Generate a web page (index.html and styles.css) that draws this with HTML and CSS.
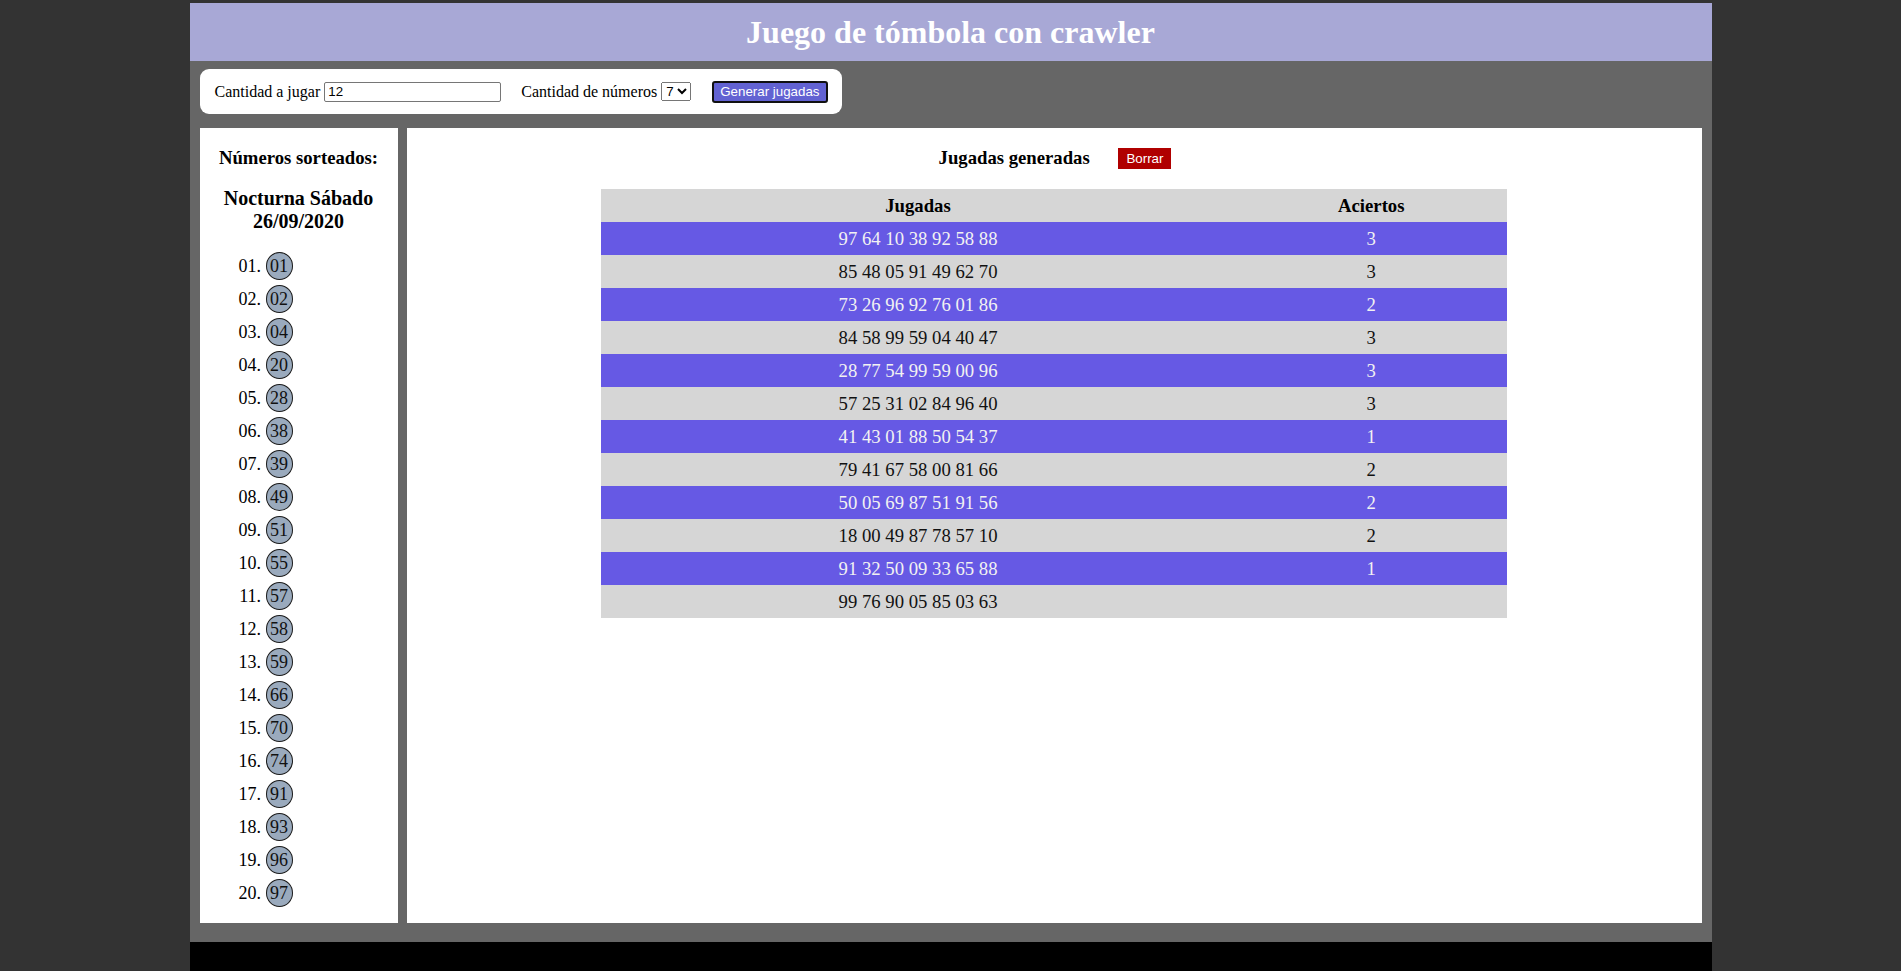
FILE: index.html
```html
<!DOCTYPE html>
<html lang="es">
<head>
<meta charset="utf-8">
<title>Juego de tómbola con crawler</title>
<link rel="stylesheet" href="styles.css">
</head>
<body>
<div class="page">
  <header class="top">
    <h1 class="title">Juego de tómbola con crawler</h1>
  </header>
  <div class="body-area">
    <form class="controls">
      <label class="field">Cantidad a jugar <input class="txt" type="text" value="12"></label>
      <label class="field">Cantidad de números <select class="sel"><option>7</option></select></label>
      <button type="button" class="btn-gen">Generar jugadas</button>
    </form>
    <div class="panels">
      <aside class="side">
        <h3 class="side-title">Números sorteados:</h3>
        <h4 class="draw-name">Nocturna Sábado 26/09/2020</h4>
        <ol class="balls">
          <li><span class="ball">01</span></li>
          <li><span class="ball">02</span></li>
          <li><span class="ball">04</span></li>
          <li><span class="ball">20</span></li>
          <li><span class="ball">28</span></li>
          <li><span class="ball">38</span></li>
          <li><span class="ball">39</span></li>
          <li><span class="ball">49</span></li>
          <li><span class="ball">51</span></li>
          <li><span class="ball">55</span></li>
          <li><span class="ball">57</span></li>
          <li><span class="ball">58</span></li>
          <li><span class="ball">59</span></li>
          <li><span class="ball">66</span></li>
          <li><span class="ball">70</span></li>
          <li><span class="ball">74</span></li>
          <li><span class="ball">91</span></li>
          <li><span class="ball">93</span></li>
          <li><span class="ball">96</span></li>
          <li><span class="ball">97</span></li>
        </ol>
      </aside>
      <main class="main">
        <h3 class="main-title">Jugadas generadas <button type="button" class="btn-del">Borrar</button></h3>
        <table class="plays">
          <thead>
            <tr><th class="c-play">Jugadas</th><th class="c-hits">Aciertos</th></tr>
          </thead>
          <tbody>
            <tr><td>97 64 10 38 92 58 88</td><td>3</td></tr>
            <tr><td>85 48 05 91 49 62 70</td><td>3</td></tr>
            <tr><td>73 26 96 92 76 01 86</td><td>2</td></tr>
            <tr><td>84 58 99 59 04 40 47</td><td>3</td></tr>
            <tr><td>28 77 54 99 59 00 96</td><td>3</td></tr>
            <tr><td>57 25 31 02 84 96 40</td><td>3</td></tr>
            <tr><td>41 43 01 88 50 54 37</td><td>1</td></tr>
            <tr><td>79 41 67 58 00 81 66</td><td>2</td></tr>
            <tr><td>50 05 69 87 51 91 56</td><td>2</td></tr>
            <tr><td>18 00 49 87 78 57 10</td><td>2</td></tr>
            <tr><td>91 32 50 09 33 65 88</td><td>1</td></tr>
            <tr><td>99 76 90 05 85 03 63</td><td></td></tr>
          </tbody>
        </table>
      </main>
    </div>
  </div>
  <footer class="foot"></footer>
</div>
</body>
</html>
```
FILE: styles.css
```css
html, body {
  margin: 0;
  padding: 0;
}
body {
  background: #333333;
  font-family: "Liberation Serif", "Times New Roman", serif;
  font-size: 16px;
  color: #000;
}
.page {
  width: 1522px;
  margin: 3px auto 0;
}
.top {
  background: #a8a8d6;
}
.title {
  margin: 0;
  padding: 10px 0;
  line-height: 38px;
  font-size: 32px;
  font-weight: bold;
  color: #fff;
  text-align: center;
}
.body-area {
  background: #666666;
  padding: 8px 10px 19px;
}
.controls {
  display: inline-flex;
  align-items: center;
  gap: 20px;
  background: #fff;
  border-radius: 9px;
  padding: 12px 14px 12px 15px;
  height: 45px;
  box-sizing: border-box;
}
.field {
  display: inline-flex;
  align-items: center;
  white-space: pre;
}
.txt {
  box-sizing: border-box;
  width: 177px;
  height: 20px;
  border: 1px solid #767676;
  border-radius: 2px;
  padding: 1px 3px;
  font-family: "Liberation Sans", Arial, sans-serif;
  font-size: 13.33px;
  margin: 0;
}
.sel {
  font-family: "Liberation Sans", Arial, sans-serif;
  font-size: 13.33px;
  height: 19px;
  margin: 0;
}
.btn-gen {
  font-family: "Liberation Sans", Arial, sans-serif;
  font-size: 13.33px;
  color: #fff;
  background: #6262d2;
  border: 2px solid #111;
  border-radius: 3px;
  padding: 1px 6px;
  height: 22px;
  line-height: 16px;
  margin: 1px 0 0 1px;
}
.panels {
  display: flex;
  gap: 9px;
  margin-top: 14px;
}
.side {
  flex: 0 0 198px;
  background: #fff;
}
.side-title {
  margin: 18.72px 0;
  font-size: 18.72px;
  text-align: center;
}
.draw-name {
  margin: 18px 0 19px;
  font-size: 20px;
  text-align: center;
}
.balls {
  list-style: decimal-leading-zero;
  margin: 0 0 16px;
  padding-left: 66px;
  font-size: 18px;
}
.balls li {
  height: 28px;
  margin-bottom: 5px;
}
.ball {
  display: inline-block;
  width: 25px;
  height: 26px;
  line-height: 26px;
  border: 1px solid #1a1a1a;
  border-radius: 50%;
  background: #9aaabd;
  text-align: center;
  font-size: 18px;
  color: #111;
}
.main {
  flex: 1;
  background: #fff;
  font-size: 18.72px;
}
.main-title {
  margin: 18.72px 0 20.5px;
  padding-left: 2px;
  font-size: 18.72px;
  text-align: center;
}
.btn-del {
  margin-left: 24px;
  font-family: "Liberation Sans", Arial, sans-serif;
  font-size: 13.33px;
  font-weight: normal;
  color: #fff;
  background: #b00000;
  border: none;
  padding: 3px 8px;
  vertical-align: 1px;
}
.plays {
  width: 70%;
  margin: 0 auto;
  border-collapse: collapse;
}
.plays th,
.plays td {
  padding: 6px;
  line-height: 21px;
  text-align: center;
  font-size: 18.72px;
}
.c-play {
  width: 70%;
}
.plays thead tr {
  background: #d6d6d6;
}
.plays tbody tr:nth-child(odd) {
  background: #6659e4;
  color: #f2f2f2;
}
.plays tbody tr:nth-child(even) {
  background: #d6d6d6;
  color: #111;
}
.foot {
  background: #000;
  height: 29px;
}
```
